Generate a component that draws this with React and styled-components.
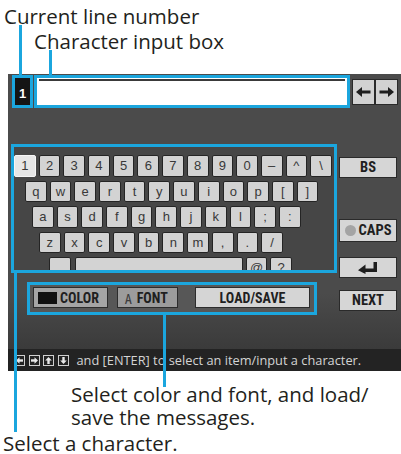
import React from "react";
import styled, { createGlobalStyle } from "styled-components";

const CYAN = "#1ba6de";

const GlobalStyle = createGlobalStyle`
  html, body {
    margin: 0;
    padding: 0;
    background: #ffffff;
  }
  body {
    font-family: "Open Sans", "Noto Sans", sans-serif;
  }
`;

const Figure = styled.div`
  position: relative;
  width: 401px;
  height: 454px;
  overflow: hidden;
`;

const TopCaptions = styled.div`
  height: 74px;
  box-sizing: border-box;
  padding: 4px 0 0 4px;
`;

const Caption = styled.div`
  font-size: 20.5px;
  line-height: ${(p) => p.$lh || 25}px;
  color: #231f20;
  white-space: nowrap;
  padding-left: ${(p) => p.$indent || 0}px;
  margin-top: ${(p) => p.$mt || 0}px;
`;

const Leader = styled.div`
  position: absolute;
  width: 3px;
  background: ${CYAN};
  z-index: 5;
`;

const Screen = styled.div`
  margin-left: 8px;
  width: 393px;
  height: 297px;
  box-sizing: border-box;
  display: flex;
  flex-direction: column;
  background: linear-gradient(#4b4b4b 0%, #4b4b4b 74%, #3b3b3b 92%, #383838 100%);
`;

/* top line: line number, input box, cursor arrows */
const TopRow = styled.div`
  display: flex;
  align-items: flex-start;
  padding: 1px 0 0 4px;
`;

const LineNum = styled.div`
  width: 21px;
  height: 33px;
  box-sizing: border-box;
  border: 3px solid ${CYAN};
  background: #151515;
  color: #ffffff;
  font-family: "Liberation Sans", Arial, sans-serif;
  font-weight: 700;
  font-size: 13px;
  display: flex;
  align-items: center;
  justify-content: center;
  padding-top: 3px;
`;

const InputBox = styled.div`
  margin-left: 1px;
  width: 316px;
  height: 33px;
  box-sizing: border-box;
  border: 3px solid ${CYAN};
  background: #ffffff;
  padding: 1px 2px 0;
`;

const InputLine = styled.div`
  height: 2px;
  background: #3a3a3a;
`;

const ArrowGroup = styled.div`
  display: flex;
  margin: 4px 0 0 2px;
`;

const ArrowBtn = styled.div`
  width: 23px;
  height: 26px;
  box-sizing: border-box;
  background: #d2d2d2;
  border: 1px solid #2a2a2a;
  display: flex;
  align-items: center;
  justify-content: center;
`;

/* middle: keyboard + tools on the left, side buttons on the right */
const Middle = styled.div`
  display: flex;
  margin-top: 36px;
`;

const LeftCol = styled.div`
  margin-left: 3px;
  width: 326px;
`;

const Keyboard = styled.div`
  width: 326px;
  height: 129px;
  box-sizing: border-box;
  border: 3px solid ${CYAN};
  background: #464646;
  padding-top: 8px;
  overflow: hidden;
`;

const KeyRow = styled.div`
  display: flex;
  gap: 3px;
  margin-left: ${(p) => p.$offset}px;
  margin-bottom: 4px;
`;

const Key = styled.div`
  flex-shrink: 0;
  width: ${(p) => p.$w || 21.7}px;
  height: 21.5px;
  margin-left: ${(p) => p.$ml || 0}px;
  box-sizing: border-box;
  background: ${(p) => (p.$active ? "#e6e6e6" : "#d3d3d3")};
  border: 1px solid ${(p) => (p.$active ? "#f6f6f6" : "#242424")};
  border-radius: 2px;
  color: #383838;
  font-family: "Liberation Sans", Arial, sans-serif;
  font-size: 13px;
  display: flex;
  align-items: center;
  justify-content: center;
`;

const Tools = styled.div`
  margin: 9px 0 0 16px;
  width: 290px;
  height: 33px;
  box-sizing: border-box;
  border: 3px solid ${CYAN};
  background: #575757;
  display: flex;
  align-items: flex-start;
  padding: 2px 0 0 3px;
`;

const condensed = `
  font-family: "Liberation Sans Narrow", "Roboto Condensed", "Liberation Sans", sans-serif;
  font-stretch: condensed;
  font-weight: 700;
  color: #1f1f1f;
`;

const ToolBtn = styled.div`
  flex-shrink: 0;
  width: ${(p) => p.$w}px;
  height: 21px;
  margin-right: ${(p) => p.$gap || 0}px;
  box-sizing: border-box;
  background: ${(p) => p.$bg};
  border: 1px solid #2c2c2c;
  display: flex;
  align-items: center;
  justify-content: ${(p) => (p.$center ? "center" : "flex-start")};
  padding-left: ${(p) => (p.$center ? 0 : 4)}px;
  font-size: 14px;
  ${condensed}
`;

const Swatch = styled.span`
  width: 19px;
  height: 12px;
  background: #111111;
  margin-right: 3px;
`;

const FontGlyph = styled.span`
  font-family: "Open Sans", sans-serif;
  font-weight: 400;
  font-size: 15px;
  color: #3c3c3c;
  margin: 0 5px 0 3px;
`;

const RightCol = styled.div`
  margin-left: 2px;
  width: 58px;
  display: flex;
  flex-direction: column;
`;

const SideBtn = styled.div`
  width: 58px;
  height: ${(p) => p.$h || 21}px;
  margin-top: ${(p) => p.$mt}px;
  box-sizing: border-box;
  background: #d6d6d6;
  border: 1px solid #2a2a2a;
  display: flex;
  align-items: center;
  justify-content: center;
  font-size: 14.5px;
  ${condensed}
`;

const CapsDot = styled.span`
  width: 11px;
  height: 11px;
  border-radius: 50%;
  background: #a4a4a4;
  margin-right: 3px;
`;

const StatusBar = styled.div`
  margin-top: auto;
  height: 22px;
  background: #232323;
  display: flex;
  align-items: center;
  padding-left: 6px;
  color: #d4d4d4;
  font-size: 12.8px;
  white-space: nowrap;
`;

const NavIcons = styled.div`
  display: flex;
  gap: 3.5px;
  margin-right: 8px;
`;

const BottomCaptions = styled.div`
  padding-top: 12px;
`;

const ArrowIcon = ({ dir }) => (
  <svg width="15" height="10" viewBox="0 0 15 10">
    <g transform={dir === "right" ? "translate(15 0) scale(-1 1)" : undefined}>
      <polygon points="0,5 6,0 6,10" fill="#1e1e1e" />
      <rect x="5" y="3.5" width="9.5" height="3" fill="#1e1e1e" />
    </g>
  </svg>
);

const EnterIcon = () => (
  <svg width="22" height="14" viewBox="0 0 22 14">
    <rect x="16.5" y="1" width="3.5" height="10" fill="#1e1e1e" />
    <rect x="7" y="7.5" width="13" height="3.5" fill="#1e1e1e" />
    <polygon points="1,9.25 8.5,3.5 8.5,13" fill="#1e1e1e" />
  </svg>
);

const rot = { left: 0, right: 180, up: 90, down: 270 };

const NavIcon = ({ dir }) => (
  <svg width="11" height="11" viewBox="0 0 11 11">
    <rect x="0.5" y="0.5" width="10" height="10" fill="none" stroke="#cfcfcf" />
    <g transform={`rotate(${rot[dir]} 5.5 5.5)`}>
      <polygon points="2,5.5 5.5,2.2 5.5,8.8" fill="#e8e8e8" />
      <rect x="5" y="4.3" width="4" height="2.4" fill="#e8e8e8" />
    </g>
  </svg>
);

const rows = [
  { offset: 0, keys: ["1", "2", "3", "4", "5", "6", "7", "8", "9", "0", "–", "^", "\\"] },
  { offset: 11, keys: ["q", "w", "e", "r", "t", "y", "u", "i", "o", "p", "[", "]"] },
  { offset: 18, keys: ["a", "s", "d", "f", "g", "h", "j", "k", "l", ";", ":"] },
  { offset: 25, keys: ["z", "x", "c", "v", "b", "n", "m", ",", ".", "/"] },
];

export default function App() {
  return (
    <>
      <GlobalStyle />
      <Figure>
        <TopCaptions>
          <Caption>Current line number</Caption>
          <Caption $indent={30}>Character input box</Caption>
        </TopCaptions>

        <Screen>
          <TopRow>
            <LineNum>1</LineNum>
            <InputBox>
              <InputLine />
            </InputBox>
            <ArrowGroup>
              <ArrowBtn>
                <ArrowIcon dir="left" />
              </ArrowBtn>
              <ArrowBtn>
                <ArrowIcon dir="right" />
              </ArrowBtn>
            </ArrowGroup>
          </TopRow>

          <Middle>
            <LeftCol>
              <Keyboard>
                {rows.map((row, i) => (
                  <KeyRow key={i} $offset={row.offset}>
                    {row.keys.map((k, j) => (
                      <Key key={k} $active={i === 0 && j === 0}>
                        {k}
                      </Key>
                    ))}
                  </KeyRow>
                ))}
                <KeyRow $offset={35}>
                  <Key />
                  <Key $w={168} $ml={1} />
                  <Key>@</Key>
                  <Key>?</Key>
                </KeyRow>
              </Keyboard>

              <Tools>
                <ToolBtn $w={75} $gap={9} $bg="#a5a5a5">
                  <Swatch />
                  COLOR
                </ToolBtn>
                <ToolBtn $w={61} $gap={17} $bg="#9c9c9c">
                  <FontGlyph>A</FontGlyph>
                  FONT
                </ToolBtn>
                <ToolBtn $w={115} $bg="#d5d5d5" $center>
                  LOAD/SAVE
                </ToolBtn>
              </Tools>
            </LeftCol>

            <RightCol>
              <SideBtn $mt={13}>BS</SideBtn>
              <SideBtn $mt={41} $h={23}>
                <CapsDot />
                CAPS
              </SideBtn>
              <SideBtn $mt={15}>
                <EnterIcon />
              </SideBtn>
              <SideBtn $mt={12}>NEXT</SideBtn>
            </RightCol>
          </Middle>

          <StatusBar>
            <NavIcons>
              <NavIcon dir="left" />
              <NavIcon dir="right" />
              <NavIcon dir="up" />
              <NavIcon dir="down" />
            </NavIcons>
            and [ENTER] to select an item/input a character.
          </StatusBar>
        </Screen>

        <BottomCaptions>
          <Caption $indent={71} $lh={23}>Select color and font, and load/</Caption>
          <Caption $indent={71} $lh={23}>save the messages.</Caption>
          <Caption $indent={3} $lh={22} $mt={3}>Select a character.</Caption>
        </BottomCaptions>

        <Leader style={{ left: 19, top: 25, height: 51 }} />
        <Leader style={{ left: 49, top: 50, height: 26 }} />
        <Leader style={{ left: 14, top: 272, height: 160 }} />
        <Leader style={{ left: 163, top: 314, height: 73 }} />
      </Figure>
    </>
  );
}
